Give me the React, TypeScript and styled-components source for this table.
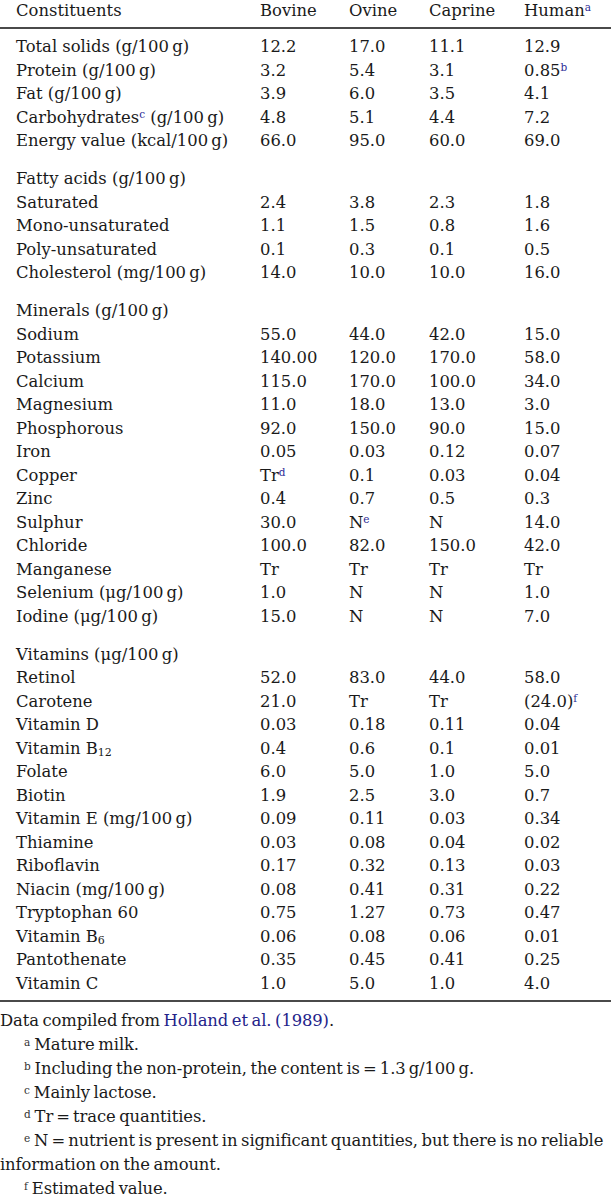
import React from "react";
import styled, { createGlobalStyle } from "styled-components";

const GlobalStyle = createGlobalStyle`
  body {
    margin: 0;
    background: #ffffff;
    color: #1a1a1a;
    font-family: "DejaVu Serif", "Liberation Serif", serif;
    font-size: 16.4px;
  }
`;

const Page = styled.div`
  width: 611px;
`;

const Table = styled.table`
  width: 611px;
  border-collapse: collapse;
  table-layout: fixed;
`;

const HeadCell = styled.th`
  text-align: left;
  font-weight: normal;
  line-height: 22px;
  padding: 0 0 5px 0;
  border-bottom: 2px solid #4a4a4a;
  &:first-child {
    padding-left: 16px;
  }
`;

const Cell = styled.td<{ $gap?: number }>`
  padding: ${(p) => p.$gap || 0}px 0 0 0;
  line-height: 23.5px;
  white-space: nowrap;
  vertical-align: bottom;
  &:first-child {
    padding-left: 16px;
  }
`;

const LastRow = styled.tr`
  td {
    padding-bottom: 5px;
    border-bottom: 2px solid #4a4a4a;
  }
`;

const Sup = styled.span<{ $link?: boolean }>`
  font-size: 10.5px;
  line-height: 0;
  vertical-align: 0.5em;
  color: ${(p) => (p.$link ? "#2c2c96" : "#333")};
`;

const Sub = styled.span`
  font-size: 11px;
  line-height: 0;
  vertical-align: -0.2em;
`;

const Footer = styled.div`
  margin-top: 7px;
  line-height: 24px;
  word-spacing: -1.4px;
  letter-spacing: -0.12px;
`;

const Note = styled.p<{ $indent?: boolean }>`
  margin: 0;
  text-indent: ${(p) => (p.$indent ? "24px" : "0")};
`;

const Link = styled.span`
  color: #23238a;
`;

const NoteMark = styled.span`
  font-size: 10.5px;
  line-height: 0;
  vertical-align: 0.35em;
  margin-right: 4px;
  color: #333;
`;

type Row = [React.ReactNode, React.ReactNode?, React.ReactNode?, React.ReactNode?, React.ReactNode?];

const g = "(g/100\u2009g)";
const mg = "(mg/100\u2009g)";
const ug = "(\u03bcg/100\u2009g)";

const sections: Row[][] = [
  [
    [`Total solids ${g}`, "12.2", "17.0", "11.1", "12.9"],
    [`Protein ${g}`, "3.2", "5.4", "3.1", <>0.85<Sup $link>b</Sup></>],
    [`Fat ${g}`, "3.9", "6.0", "3.5", "4.1"],
    [<>Carbohydrates<Sup $link>c</Sup> {g}</>, "4.8", "5.1", "4.4", "7.2"],
    [`Energy value (kcal/100\u2009g)`, "66.0", "95.0", "60.0", "69.0"],
  ],
  [
    [`Fatty acids ${g}`],
    ["Saturated", "2.4", "3.8", "2.3", "1.8"],
    ["Mono-unsaturated", "1.1", "1.5", "0.8", "1.6"],
    ["Poly-unsaturated", "0.1", "0.3", "0.1", "0.5"],
    [`Cholesterol ${mg}`, "14.0", "10.0", "10.0", "16.0"],
  ],
  [
    [`Minerals ${g}`],
    ["Sodium", "55.0", "44.0", "42.0", "15.0"],
    ["Potassium", "140.00", "120.0", "170.0", "58.0"],
    ["Calcium", "115.0", "170.0", "100.0", "34.0"],
    ["Magnesium", "11.0", "18.0", "13.0", "3.0"],
    ["Phosphorous", "92.0", "150.0", "90.0", "15.0"],
    ["Iron", "0.05", "0.03", "0.12", "0.07"],
    ["Copper", <>Tr<Sup $link>d</Sup></>, "0.1", "0.03", "0.04"],
    ["Zinc", "0.4", "0.7", "0.5", "0.3"],
    ["Sulphur", "30.0", <>N<Sup $link>e</Sup></>, "N", "14.0"],
    ["Chloride", "100.0", "82.0", "150.0", "42.0"],
    ["Manganese", "Tr", "Tr", "Tr", "Tr"],
    [`Selenium ${ug}`, "1.0", "N", "N", "1.0"],
    [`Iodine ${ug}`, "15.0", "N", "N", "7.0"],
  ],
  [
    [`Vitamins ${ug}`],
    ["Retinol", "52.0", "83.0", "44.0", "58.0"],
    ["Carotene", "21.0", "Tr", "Tr", <>(24.0)<Sup $link>f</Sup></>],
    ["Vitamin D", "0.03", "0.18", "0.11", "0.04"],
    [<>Vitamin B<Sub>12</Sub></>, "0.4", "0.6", "0.1", "0.01"],
    ["Folate", "6.0", "5.0", "1.0", "5.0"],
    ["Biotin", "1.9", "2.5", "3.0", "0.7"],
    [`Vitamin E ${mg}`, "0.09", "0.11", "0.03", "0.34"],
    ["Thiamine", "0.03", "0.08", "0.04", "0.02"],
    ["Riboflavin", "0.17", "0.32", "0.13", "0.03"],
    [`Niacin ${mg}`, "0.08", "0.41", "0.31", "0.22"],
    ["Tryptophan 60", "0.75", "1.27", "0.73", "0.47"],
    [<>Vitamin B<Sub>6</Sub></>, "0.06", "0.08", "0.06", "0.01"],
    ["Pantothenate", "0.35", "0.45", "0.41", "0.25"],
    ["Vitamin C", "1.0", "5.0", "1.0", "4.0"],
  ],
];

const notes: [string, string][] = [
  ["a", "Mature milk."],
  ["b", "Including the non-protein, the content is\u2009=\u20091.3\u2009g/100\u2009g."],
  ["c", "Mainly lactose."],
  ["d", "Tr\u2009=\u2009trace quantities."],
  ["e", "N\u2009=\u2009nutrient is present in significant quantities, but there is no reliable information on the amount."],
  ["f", "Estimated value."],
];

export default function App() {
  return (
    <Page>
      <GlobalStyle />
      <Table>
        <colgroup>
          <col style={{ width: 260 }} />
          <col style={{ width: 89 }} />
          <col style={{ width: 80 }} />
          <col style={{ width: 95 }} />
          <col />
        </colgroup>
        <thead>
          <tr>
            <HeadCell>Constituents</HeadCell>
            <HeadCell>Bovine</HeadCell>
            <HeadCell>Ovine</HeadCell>
            <HeadCell>Caprine</HeadCell>
            <HeadCell>
              Human<Sup $link>a</Sup>
            </HeadCell>
          </tr>
        </thead>
        <tbody>
          {sections.map((rows, si) =>
            rows.map((row, ri) => {
              const gap = ri === 0 ? (si === 0 ? 6 : 14.5) : 0;
              const isLast = si === sections.length - 1 && ri === rows.length - 1;
              const cells = [0, 1, 2, 3, 4].map((ci) => (
                <Cell key={ci} $gap={gap}>
                  {row[ci]}
                </Cell>
              ));
              return isLast ? (
                <LastRow key={`${si}-${ri}`}>{cells}</LastRow>
              ) : (
                <tr key={`${si}-${ri}`}>{cells}</tr>
              );
            })
          )}
        </tbody>
      </Table>
      <Footer>
        <Note>
          Data compiled from <Link>Holland et al. (1989)</Link>.
        </Note>
        {notes.map(([mark, text]) => (
          <Note key={mark} $indent>
            <NoteMark>{mark}</NoteMark>
            {text}
          </Note>
        ))}
      </Footer>
    </Page>
  );
}
